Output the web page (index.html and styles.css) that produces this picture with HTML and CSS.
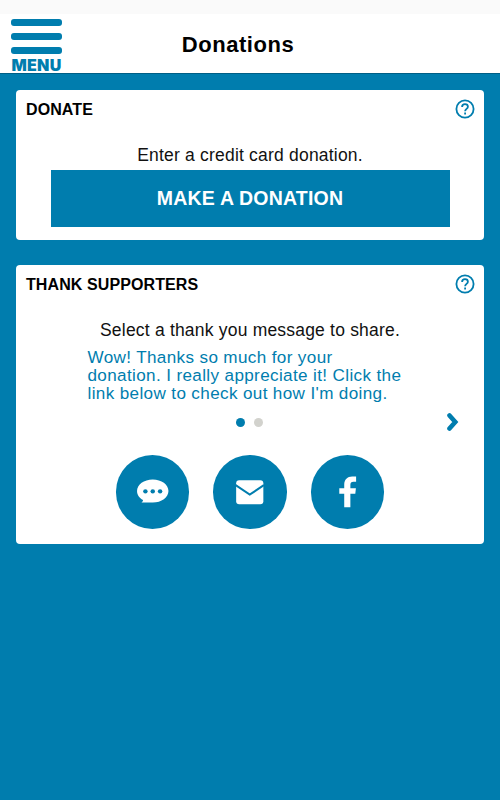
FILE: index.html
```
<!DOCTYPE html>
<html lang="en">
<head>
  <meta charset="UTF-8">
  <meta name="viewport" content="width=device-width, initial-scale=1.0">
  <title>Donations</title>
  <link rel="stylesheet" href="styles.css">
</head>
<body>
  <div class="status-bar"></div>
  <header class="header">
    <button class="menu" type="button">
      <span class="bar"></span>
      <span class="bar"></span>
      <span class="bar"></span>
      <span class="menu-label">MENU</span>
    </button>
    <h1>Donations</h1>
  </header>

  <main>
    <section class="card donate">
      <div class="card-head">
        <h2>DONATE</h2>
        <svg class="help" viewBox="0 0 20 20">
          <circle cx="10" cy="10" r="8.6" />
          <path d="M7.100 8C7.100 6.200 8.300 5.200 10 5.200s2.900 1 2.900 2.500c0 2.100-2.800 2.200-2.800 4.500" />
          <path d="M10.100 13.600v2" />
        </svg>
      </div>
      <p class="intro">Enter a credit card donation.</p>
      <button class="donate-btn" type="button">MAKE A DONATION</button>
    </section>

    <section class="card thank">
      <div class="card-head">
        <h2>THANK SUPPORTERS</h2>
        <svg class="help" viewBox="0 0 20 20">
          <circle cx="10" cy="10" r="8.6" />
          <path d="M7.100 8C7.100 6.200 8.300 5.200 10 5.200s2.900 1 2.900 2.500c0 2.100-2.800 2.200-2.800 4.500" />
          <path d="M10.100 13.600v2" />
        </svg>
      </div>
      <p class="intro">Select a thank you message to share.</p>
      <p class="message">Wow! Thanks so much for your<br>donation. I really appreciate it! Click the<br>link below to check out how I'm doing.</p>
      <div class="pager">
        <span class="dot active"></span>
        <span class="dot"></span>
        <svg class="next" viewBox="0 0 12 20">
          <path d="M2.500 3.400L8.300 10l-5.800 6.600" />
        </svg>
      </div>
      <div class="share">
        <button type="button" aria-label="Text message">
          <svg viewBox="0 0 73 73">
            <path fill="#fff" d="M36.500 24.300c8.700 0 15.600 5 15.600 11.400s-6.900 11.500-15.600 11.500H25.200c1.200-.7 1.700-1.500 1.600-2.500-3.600-2-5.900-5.300-5.900-9 0-6.400 6.900-11.400 15.600-11.400z" />
            <circle cx="29.200" cy="36.100" r="2.200" />
            <circle cx="36.500" cy="36.100" r="2.200" />
            <circle cx="43.800" cy="36.100" r="2.200" />
          </svg>
        </button>
        <button type="button" aria-label="Email">
          <svg viewBox="0 0 73 73">
            <rect fill="#fff" x="23" y="25" width="27" height="24" rx="3" />
            <path class="flap" d="M22.500 30L36.500 39.300L50.500 30" />
          </svg>
        </button>
        <button type="button" aria-label="Facebook">
          <svg viewBox="0 0 73 73">
            <path fill="#fff" d="M33 52V38.400h-4.900v-5.300H33v-3.600c0-5.300 3.200-8.200 7.900-8.200h3.900v5.300h-2.600c-2.300 0-3.100 1-3.100 2.900v3.600h5.500l-.6 5.300h-4.900V52z" />
          </svg>
        </button>
      </div>
    </section>
  </main>
</body>
</html>
```
FILE: styles.css
```
* {
  box-sizing: border-box;
}
body {
  margin: 0;
  min-height: 100vh;
  background-color: #007dae;
  color: #111;
  font-family: "Liberation Sans", Arial, sans-serif;
}
h1, h2, p {
  margin: 0;
}
button {
  border: none;
  padding: 0;
  font-family: inherit;
  cursor: pointer;
}
.status-bar {
  height: 14px;
  background-color: #fafafa;
}
.header {
  display: grid;
  grid-template-columns: 74px 1fr 98px;
  height: 60px;
  background-color: #fff;
  border-bottom: 1px solid #005f86;
}
.menu {
  display: flex;
  flex-direction: column;
  align-items: center;
  gap: 7px;
  width: 51px;
  height: 58px;
  margin-left: 11px;
  padding-top: 4.5px;
  background: none;
}
.bar {
  flex: none;
  width: 51px;
  height: 7px;
  border-radius: 3px;
  background-color: #007dae;
}
.menu-label {
  margin-top: -3px;
  color: #007dae;
  font-family: Inter, "Liberation Sans", sans-serif;
  font-size: 16px;
  font-weight: 900;
  line-height: 15px;
  letter-spacing: 0.3px;
}
h1 {
  padding-top: 17px;
  color: #000;
  font-size: 22px;
  line-height: 28px;
  letter-spacing: 0.55px;
  text-align: center;
}
main {
  display: flex;
  flex-direction: column;
  gap: 25px;
  padding: 16px 16px 0;
}
.card {
  background-color: #fff;
  border-radius: 4px;
}
.donate {
  height: 150px;
}
.thank {
  height: 279px;
}
.card-head {
  display: flex;
  justify-content: space-between;
  align-items: center;
  height: 38px;
  padding: 0 9px 0 10px;
}
h2 {
  padding-top: 2px;
  color: #000;
  font-size: 16px;
  letter-spacing: 0.1px;
}
.help {
  width: 20px;
  height: 20px;
  fill: none;
  stroke: #007dae;
  stroke-width: 1.8;
}
.intro {
  padding-top: 17px;
  font-size: 17.5px;
  line-height: 20px;
  letter-spacing: 0.2px;
  text-align: center;
}
.donate-btn {
  display: block;
  width: 399px;
  height: 57px;
  margin: 5px auto 0;
  background-color: #007dae;
  color: #fff;
  font-size: 19.5px;
  font-weight: 700;
  letter-spacing: 0.2px;
}
.message {
  padding: 9px 0 0 71.5px;
  color: #007dae;
  font-size: 17.1px;
  line-height: 18px;
  letter-spacing: 0.36px;
}
.pager {
  display: grid;
  grid-template-columns: 9px 9px 1fr 12px;
  column-gap: 9px;
  align-items: center;
  height: 20px;
  margin: 9px 25px 0 220px;
}
.dot {
  width: 9px;
  height: 9px;
  border-radius: 50%;
  background-color: #d2d2cd;
}
.dot.active {
  background-color: #007dae;
}
.next {
  grid-column: 4;
  width: 12px;
  height: 20px;
  fill: none;
  stroke: #007dae;
  stroke-width: 4.6;
  stroke-linecap: round;
}
.share {
  display: flex;
  justify-content: center;
  gap: 24px;
  padding-top: 23px;
}
.share button {
  width: 73.5px;
  height: 73.5px;
  border-radius: 50%;
  background-color: #007dae;
}
.share svg {
  display: block;
  fill: #007dae;
}
.flap {
  fill: none;
  stroke: #007dae;
  stroke-width: 2;
}
```
